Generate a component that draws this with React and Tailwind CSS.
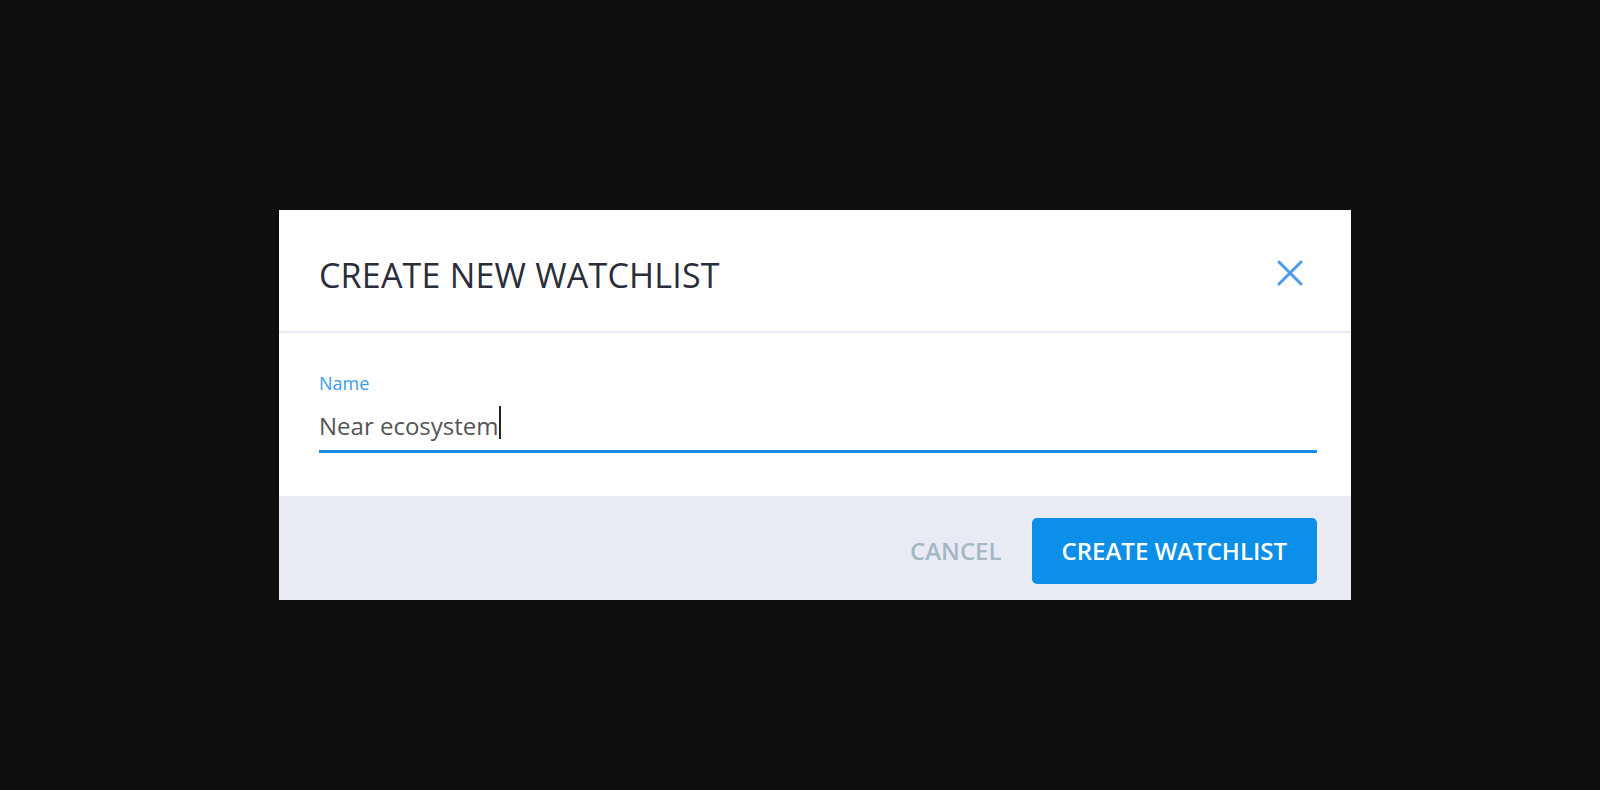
import React from "react";

export default function App() {
  return (
    <div className="w-full h-[790px] bg-[#0f0f10] pl-[279px] pt-[210px] font-['Open_Sans',sans-serif]">
      <div className="w-[1072px] bg-white flex flex-col">
        {/* Header */}
        <div className="h-[123px] pt-2 pl-10 pr-[48px] flex items-center justify-between border-b-2 border-[#e7e9f3]">
          <h2 className="text-[34px] leading-none text-[#2a2d3a] tracking-[0.2px]">CREATE NEW WATCHLIST</h2>
          <button className="w-[26px] h-[26px] flex items-center justify-center -mt-1">
            <svg width="26" height="26" viewBox="0 0 26 26" fill="none" stroke="#4a9ce6" strokeWidth="3" strokeLinecap="round">
              <path d="M2 2 L24 24 M24 2 L2 24" />
            </svg>
          </button>
        </div>

        {/* Body */}
        <div className="pt-[38px] pb-[43px] pl-10 pr-[34px]">
          <label className="block text-[18px] leading-6 text-[#3a9de8]">Name</label>
          <div className="mt-[11px] pb-[11px] border-b-[3px] border-[#1a8ae4] flex items-end">
            <span className="text-[24px] leading-8 text-[#555] translate-y-[3px]">Near ecosystem</span>
            <span className="inline-block w-[2px] h-[33px] bg-[#222] ml-[1px]" />
          </div>
        </div>

        {/* Footer */}
        <div className="bg-[#e8ebf3] pt-[22px] pb-[16px] pr-[34px] flex justify-end items-center gap-[30px]">
          <button className="text-[24px] font-semibold text-[#a3b8c2]">CANCEL</button>
          <button className="h-[66px] px-[30px] rounded-[5px] bg-[#0b8fe8] text-white text-[24px] font-semibold">
            CREATE WATCHLIST
          </button>
        </div>
      </div>
    </div>
  );
}
